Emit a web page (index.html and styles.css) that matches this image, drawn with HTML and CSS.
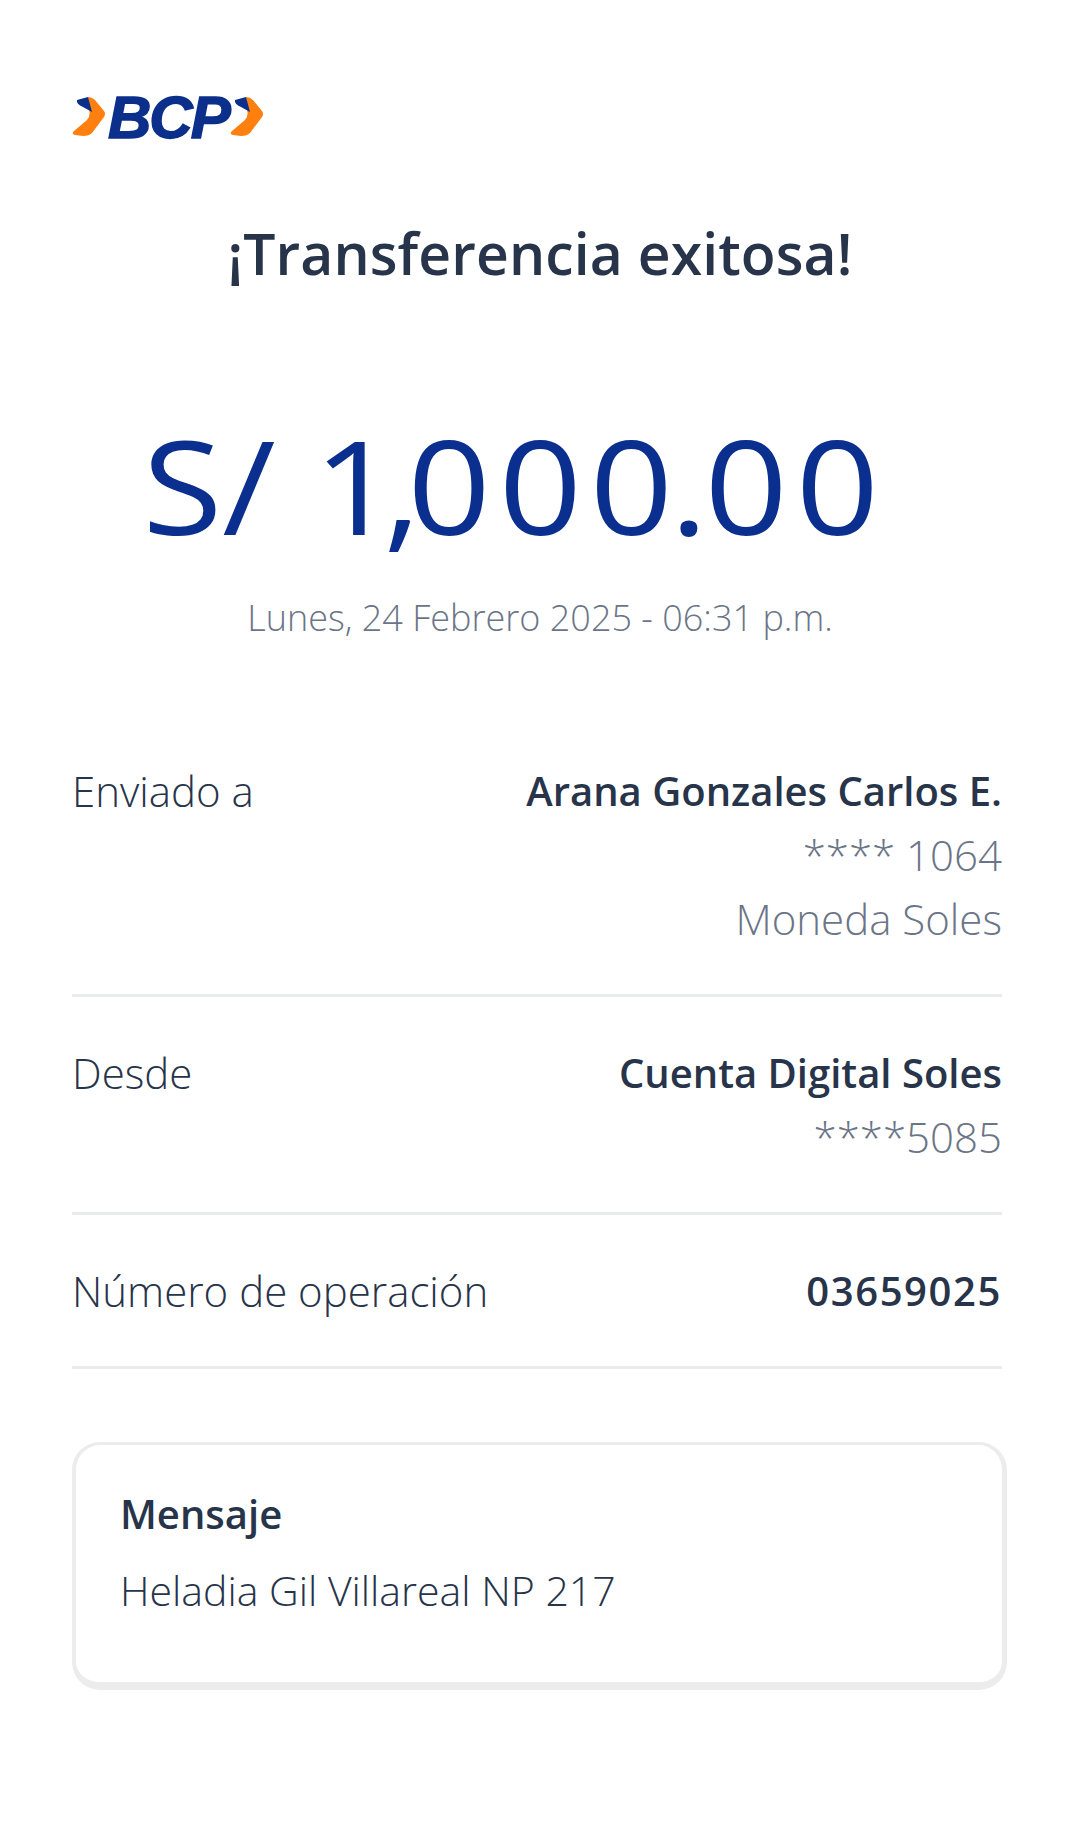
FILE: index.html
```html
<!DOCTYPE html>
<html lang="es">
<head>
    <meta charset="UTF-8">
    <title>Transferencia exitosa</title>
    <link rel="stylesheet" href="styles.css">
</head>
<body>
    <div class="page">
        <div class="logo">
            <svg class="chev" width="34" height="40" viewBox="0 0 34 40"><path d="M16 0Q20 0 23 3L32 14Q34 17 32 20L20 36Q17 39 11 39L3 38Q-1 37 2 34L15 23Q19 18 17 13Z" fill="#ff7f0f"/><path d="M5 3L16 0L20 15L11 10Q4 7 5 3Z" fill="#0b2f8a"/></svg>
            <span class="logo-text">BCP</span>
            <svg class="chev" width="34" height="40" viewBox="0 0 34 40"><path d="M16 0Q20 0 23 3L32 14Q34 17 32 20L20 36Q17 39 11 39L3 38Q-1 37 2 34L15 23Q19 18 17 13Z" fill="#ff7f0f"/><path d="M5 3L16 0L20 15L11 10Q4 7 5 3Z" fill="#0b2f8a"/></svg>
        </div>
        <h1 class="title">¡Transferencia exitosa!</h1>
        <div class="amount"><span class="currency">S/ </span><span class="comma">1,</span>00<span class="point">0.</span>00</div>
        <div class="date">Lunes, 24 Febrero 2025 - 06:31 p.m.</div>

        <div class="rows">
            <div class="row">
                <div class="label">Enviado a</div>
                <div class="values">
                    <div class="strong">Arana Gonzales Carlos E.</div>
                    <div class="muted">**** 1064</div>
                    <div class="muted">Moneda Soles</div>
                </div>
            </div>
            <div class="row">
                <div class="label">Desde</div>
                <div class="values">
                    <div class="strong">Cuenta Digital Soles</div>
                    <div class="muted">****5085</div>
                </div>
            </div>
            <div class="row">
                <div class="label">Número de operación</div>
                <div class="values">
                    <div class="strong digits">03659025</div>
                </div>
            </div>
        </div>

        <div class="card">
            <div class="card-title">Mensaje</div>
            <div class="card-text">Heladia Gil Villareal NP 217</div>
        </div>
    </div>
</body>
</html>
```

FILE: styles.css
```css
* {
    margin: 0;
    padding: 0;
    box-sizing: border-box;
}
html, body {
    background-color: #fff;
}
body {
    width: 1080px;
    height: 1838px;
    font-family: "Open Sans", "Noto Sans", sans-serif;
    font-weight: 300;
    color: #27344a;
}
.page {
    padding: 91px 78px 0 72px;
}
.logo {
    display: flex;
    align-items: center;
    height: 52px;
}
.logo-text {
    font-family: "Liberation Sans", sans-serif;
    font-size: 60px;
    font-weight: 700;
    font-style: italic;
    color: #0b2f8a;
    -webkit-text-stroke: 1.5px #0b2f8a;
    letter-spacing: -2px;
    margin: 0 1px 0 2px;
}
.title {
    margin-top: 78px;
    padding-left: 6px;
    text-align: center;
    font-size: 57px;
    letter-spacing: 0.1px;
    line-height: 64px;
    font-weight: 600;
}
.amount {
    margin-top: 125px;
    padding-right: 40px;
    text-align: center;
    font-size: 130px;
    letter-spacing: 7px;
    line-height: 150px;
    font-weight: 400;
    color: #0b2f8f;
    transform: scaleX(1.12);
}
.currency {
    letter-spacing: 0;
}
.comma {
    letter-spacing: -12px;
}
.point {
    letter-spacing: -3px;
}
.date {
    margin-top: 36px;
    padding-left: 6px;
    text-align: center;
    font-size: 36px;
    line-height: 44px;
    color: #6b7587;
}
.rows {
    margin-top: 119px;
}
.row {
    display: flex;
    justify-content: space-between;
    padding: 44px 0 43px;
    border-bottom: 3px solid #e9ebed;
    font-size: 42px;
    line-height: 64px;
}
.row:first-child {
    padding-top: 0;
}
.strong {
    font-size: 40px;
    font-weight: 600;
    text-align: right;
}
.digits {
    letter-spacing: 1.6px;
}
.muted {
    text-align: right;
    color: #6b7587;
}
.card {
    margin-top: 73px;
    width: 935px;
    height: 248px;
    padding: 31px 44px;
    border: solid #ececec;
    border-width: 3px 5px 8px 4px;
    border-radius: 28px;
    font-size: 41px;
    line-height: 76px;
}
.card-title {
    font-size: 40px;
    font-weight: 600;
}
```
